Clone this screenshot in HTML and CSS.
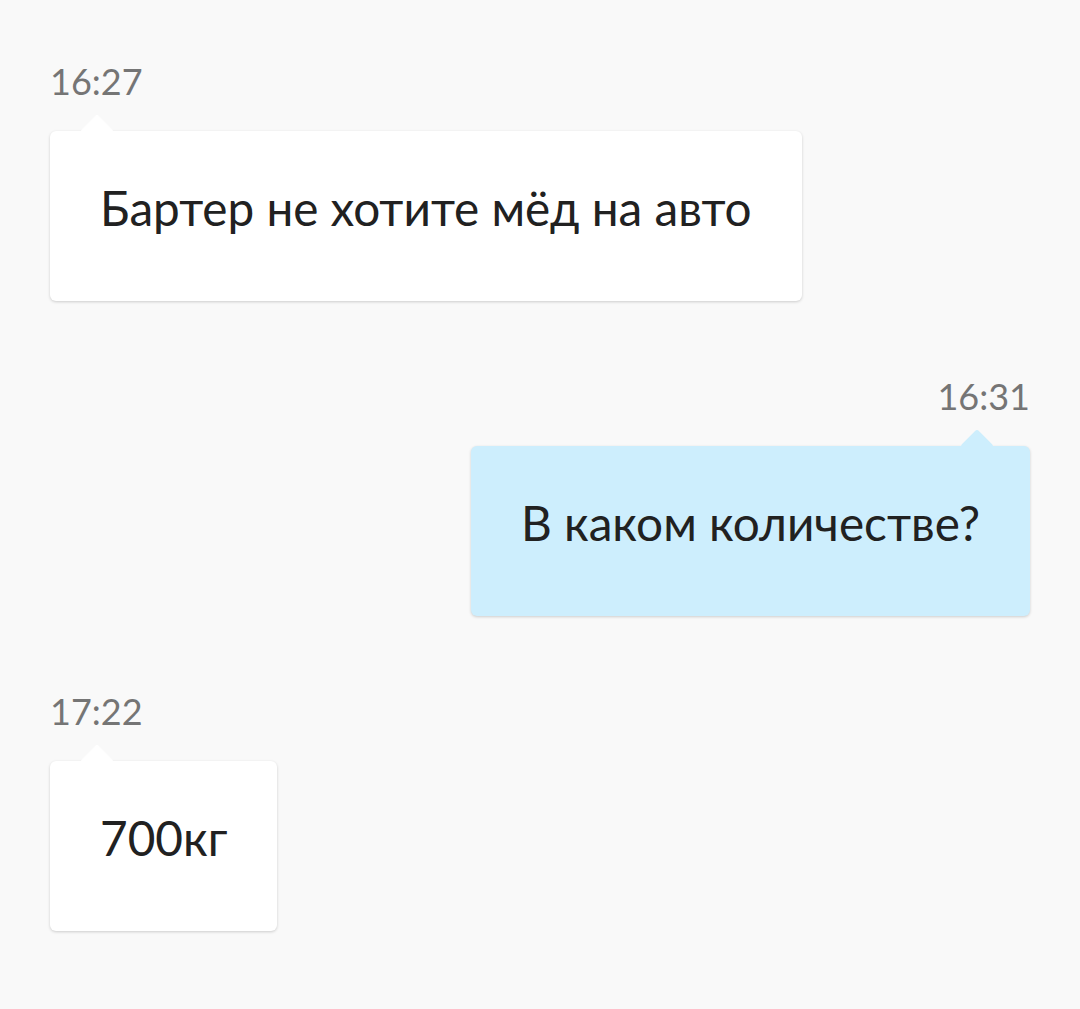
FILE: index.html
```html
<html>
<head>
<meta charset="UTF-8">
<meta name="viewport" content="width=device-width, initial-scale=1.0">
<title>Чат</title>
<link rel="stylesheet" href="styles.css">
</head>
<body>
    <div class="chat">
        <div class="msg">
            <div class="time">16:27</div>
            <div class="bubble">Бартер не хотите мёд на авто</div>
        </div>
        <div class="msg msg-out">
            <div class="time">16:31</div>
            <div class="bubble">В каком количестве?</div>
        </div>
        <div class="msg">
            <div class="time">17:22</div>
            <div class="bubble">700кг</div>
        </div>
    </div>
</body>
</html>
```

FILE: styles.css
```css
body {
    margin: 0;
    background: #f9f9f9;
    font-family: Lato, "Noto Sans", sans-serif;
}
.chat {
    display: flex;
    flex-direction: column;
    gap: 75px;
    padding: 61px 50px;
}
.msg {
    display: flex;
    flex-direction: column;
    align-items: flex-start;
    gap: 30px;
}
.msg-out {
    align-items: flex-end;
}
.time {
    font-size: 36px;
    line-height: 40px;
    color: #757575;
}
.bubble {
    position: relative;
    box-sizing: border-box;
    height: 170px;
    padding: 49px 50px 0;
    font-size: 47.7px;
    line-height: 56px;
    color: #212121;
    background: #fff;
    border-radius: 6px;
    box-shadow: 0 1px 3px rgba(0, 0, 0, 0.18);
}
.bubble:before {
    content: '';
    position: absolute;
    top: -12px;
    left: 35px;
    width: 24px;
    height: 24px;
    background: inherit;
    border-radius: 3px;
    transform: rotate(45deg);
}
.msg-out .bubble {
    background: #cdeefd;
}
.msg-out .bubble:before {
    left: auto;
    right: 41px;
}
```
